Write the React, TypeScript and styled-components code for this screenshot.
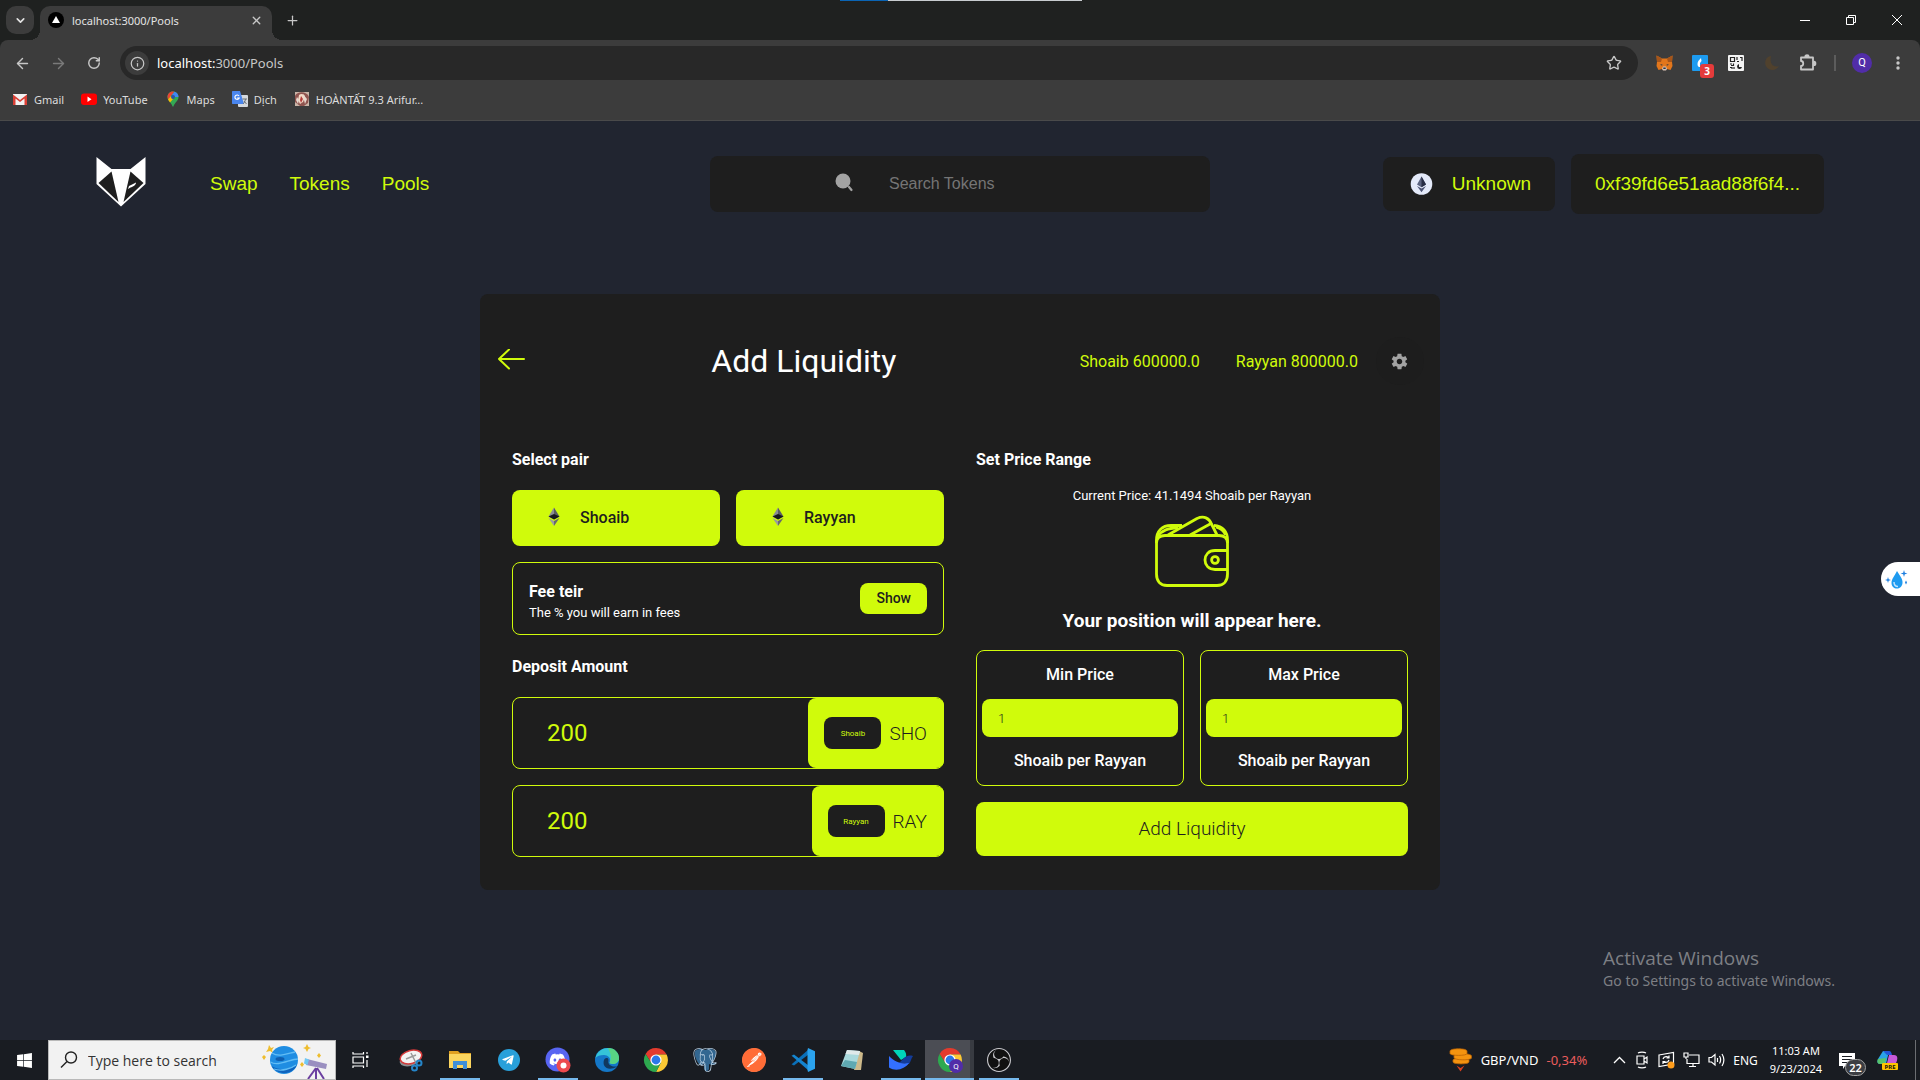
import React from "react";
import styled, { createGlobalStyle, css } from "styled-components";
import { FaWindows, FaDiscord, FaTelegramPlane } from "react-icons/fa";
import { SiPostman, SiPostgresql, SiObsstudio } from "react-icons/si";
import { IoMdSettings } from "react-icons/io";
import { X, Plus, ChevronDown, ArrowLeft, ArrowRight, Star, Info, RotateCw } from "lucide-react";

const color = {
  frame: "#1f2120",
  toolbar: "#3c3c3c",
  page: "#212530",
  panel: "#1e1e1e",
  lime: "#d0fb0b",
  taskbar: "#191c22",
};

const font = {
  system: `"Open Sans", "Noto Sans", sans-serif`,
  chrome: `"Noto Sans", "Open Sans", sans-serif`,
  arial: `"Liberation Sans", Arial, sans-serif`,
  roboto: `Roboto, "Liberation Sans", sans-serif`,
};

const GlobalStyle = createGlobalStyle`
  *, *::before, *::after { box-sizing: border-box; }
  body { margin: 0; background: ${color.page}; font-family: ${font.system}; }
  h1, h2, h3, p { margin: 0; }
  button, input { font: inherit; color: inherit; border: 0; margin: 0; padding: 0; background: none; }
  button { cursor: pointer; }
  a { color: inherit; text-decoration: none; }
  svg { display: block; flex: none; }
`;

const Screen = styled.div`
  min-height: 100vh;
  display: flex;
  flex-direction: column;
  position: relative;
`;

/* ---------- browser window ---------- */

const ShareLine = styled.div`
  position: absolute;
  top: 0;
  left: 50%;
  width: 242px;
  height: 1px;
  margin-left: -120px;
  background: linear-gradient(90deg, #0a64b4 48px, #c8ccd0 48px);
`;

const Frame = styled.header`
  background: ${color.frame};
  font-family: ${font.chrome};
`;

const TabStrip = styled.div`
  height: 40px;
  display: flex;
  align-items: flex-start;
  padding: 6px 0 0 6px;
`;

const TabSearch = styled.button`
  width: 28px;
  height: 28px;
  border-radius: 10px;
  background: ${color.toolbar};
  color: #e3e3e3;
  display: grid;
  place-items: center;
  margin-right: 6px;
`;

const Tab = styled.div`
  position: relative;
  width: 232px;
  height: 34px;
  padding: 0 8px 6px;
  display: flex;
  align-items: center;
  gap: 8px;
  background: ${color.toolbar};
  border-radius: 10px 10px 0 0;
  color: #e3e3e3;
  font-size: 11px;

  &::before,
  &::after {
    content: "";
    position: absolute;
    bottom: 0;
    width: 10px;
    height: 10px;
  }
  &::before {
    right: 100%;
    background: radial-gradient(circle at 0 0, transparent 10px, ${color.toolbar} 10px);
  }
  &::after {
    left: 100%;
    background: radial-gradient(circle at 100% 0, transparent 10px, ${color.toolbar} 10px);
  }
`;

const TabTitle = styled.span`
  flex: 1;
`;

const PlainButton = styled.button<{ $w?: number; $dim?: boolean }>`
  width: ${(p) => p.$w ?? 36}px;
  height: 28px;
  display: grid;
  place-items: center;
  color: ${(p) => (p.$dim ? "#7a7a7a" : "#c7c7c7")};
`;

const WindowButtons = styled.div`
  margin-left: auto;
  display: flex;
  color: #fff;
`;

const Toolbar = styled.div`
  background: ${color.toolbar};
  border-radius: 8px 8px 0 0;
  padding: 6px 4px 0;
  display: flex;
  align-items: center;
`;

const AddressBar = styled.div`
  flex: 1;
  height: 34px;
  margin: 0 8px;
  padding: 0 12px 0 5px;
  border-radius: 17px;
  background: #282828;
  display: flex;
  align-items: center;
  color: #c7c7c7;
  font-size: 13px;
`;

const SiteInfo = styled.button`
  width: 24px;
  height: 24px;
  border-radius: 50%;
  background: ${color.toolbar};
  display: grid;
  place-items: center;
  margin-right: 8px;
`;

const Url = styled.span`
  flex: 1;
  b { font-weight: 400; color: #fff; }
`;

const ExtensionButton = styled(PlainButton)`
  position: relative;
`;

const ExtensionBadge = styled.span`
  position: absolute;
  right: 4px;
  bottom: -1px;
  width: 14px;
  height: 14px;
  border-radius: 3px;
  background: #e53b3b;
  color: #fff;
  font: 700 10px/14px ${font.system};
  text-align: center;
`;

const ToolbarDivider = styled.div`
  width: 2px;
  height: 16px;
  margin: 0 8px;
  background: #5c5c5c;
`;

const ProfileDot = styled.span`
  width: 20px;
  height: 20px;
  border-radius: 50%;
  background: #512da8;
  color: #fff;
  font: 400 11px/20px ${font.roboto};
`;

const Bookmarks = styled.nav`
  height: 41px;
  padding: 8px 12px 10px;
  display: flex;
  align-items: center;
  gap: 17px;
  background: ${color.toolbar};
  border-bottom: 1px solid #4a4a4a;
  color: #dcdcdc;
  font-size: 11px;
`;

const Bookmark = styled.a`
  display: flex;
  align-items: center;
  gap: 6px;
`;

/* ---------- exchange page ---------- */

const Page = styled.main`
  flex: 1;
  background: ${color.page};
`;

const NavBar = styled.nav`
  width: 90%;
  margin: 0 auto;
  padding: 33px 0 80px;
  display: grid;
  grid-template-columns: 1fr 500px 1fr;
  align-items: center;
  font-family: ${font.arial};
  font-size: 19px;
  color: ${color.lime};
`;

const NavLeft = styled.div`
  display: flex;
  align-items: center;
  gap: 32px;
`;

const Brand = styled.a`
  margin-right: 32px;
`;

const TokenSearch = styled.label`
  height: 56px;
  border-radius: 8px;
  background: ${color.panel};
  display: flex;
  align-items: center;
  justify-content: center;
  gap: 35px;
`;

const TokenInput = styled.input`
  width: 196px;
  font-size: 16px;
  outline: 0;
  &::placeholder { color: #757575; opacity: 1; }
`;

const NavRight = styled.div`
  display: flex;
  align-items: center;
  justify-content: flex-end;
  gap: 16px;
`;

const NavButton = styled.button<{ $tall?: boolean }>`
  height: ${(p) => (p.$tall ? 60 : 54)}px;
  padding: 0 24px;
  border-radius: 8px;
  background: ${color.panel};
  display: flex;
  align-items: center;
  gap: 16px;
`;

const Card = styled.section`
  width: 50%;
  margin: 0 auto;
  border-radius: 8px;
  background: ${color.panel};
  color: #fff;
  font-family: ${font.roboto};
  font-size: 16px;
  line-height: 19px;
`;

const CardHeader = styled.div`
  padding: 43px 16px;
  display: flex;
  align-items: center;
  justify-content: space-between;
`;

const CardTitle = styled.h1`
  font-size: 32px;
  line-height: 38px;
  font-weight: 400;
`;

const Balances = styled.div`
  display: flex;
  align-items: center;
  gap: 36px;
  color: ${color.lime};
`;

const GearButton = styled.button`
  width: 48px;
  height: 48px;
  margin-left: -18px;
  border-radius: 50%;
  background: #1d1d1d;
  color: #a3a3a3;
  display: grid;
  place-items: center;
`;

const Columns = styled.div`
  padding: 22px 32px 33px;
  display: grid;
  grid-template-columns: repeat(2, minmax(0, 1fr));
  gap: 32px;
`;

const Column = styled.div`
  display: flex;
  flex-direction: column;
`;

const Heading = styled.h2<{ $after?: number }>`
  margin-bottom: ${(p) => p.$after ?? 21}px;
  font-size: 16px;
  line-height: 19px;
  font-weight: 700;
`;

const TwoUp = styled.div`
  display: grid;
  grid-template-columns: repeat(2, minmax(0, 1fr));
  gap: 16px;
  margin-bottom: 16px;
`;

const PairButton = styled.button`
  height: 56px;
  padding: 0 32px 2px;
  border-radius: 8px;
  background: ${color.lime};
  color: ${color.panel};
  font-weight: 500;
  display: flex;
  align-items: center;
  gap: 16px;
`;

const outlined = css`
  border: 1px solid ${color.lime};
  border-radius: 8px;
`;

const FeeBox = styled.div`
  ${outlined}
  height: 73px;
  margin-bottom: 22px;
  padding: 0 16px;
  display: flex;
  align-items: center;
  justify-content: space-between;
`;

const FeeText = styled.div`
  padding-top: 5px;
`;

const Small = styled.p<{ $center?: boolean }>`
  font-size: 13px;
  line-height: 16px;
  padding-top: 4px;
  text-align: ${(p) => (p.$center ? "center" : "left")};
`;

const FeeName = styled(Heading)`
  margin: 0;
`;

const ShowButton = styled.button`
  height: 31px;
  padding: 0 16px;
  border-radius: 8px;
  background: ${color.lime};
  color: ${color.panel};
  font-size: 14px;
  font-weight: 500;
`;

const DepositRow = styled.div`
  ${outlined}
  height: 72px;
  display: flex;
  & + & { margin-top: 16px; }
`;

const DepositInput = styled.input`
  flex: 1;
  min-width: 0;
  padding-left: 34px;
  font-size: 24px;
  color: ${color.lime};
  outline: 0;
`;

const TokenTag = styled.div`
  margin-right: -1px;
  padding: 0 17px 0 16px;
  border-radius: 8px;
  background: ${color.lime};
  color: ${color.panel};
  font-size: 19px;
  font-weight: 300;
  display: flex;
  align-items: center;
  gap: 8px;
`;

const Chip = styled.button`
  width: 57px;
  height: 32px;
  border-radius: 8px;
  background: ${color.panel};
  color: ${color.lime};
  font-size: 8px;
  font-weight: 400;
`;

const WalletWrap = styled.div`
  height: 80px;
  margin: 8px 0 18px;
  display: grid;
  place-items: center;
`;

const PositionNote = styled.h3`
  margin-bottom: 18px;
  font-size: 19px;
  line-height: 22px;
  font-weight: 700;
  text-align: center;
`;

const PriceBox = styled.div`
  ${outlined}
  padding: 14px 5px 15px;
  display: flex;
  flex-direction: column;
  text-align: center;
  font-weight: 500;
`;

const PriceInput = styled.input`
  width: 100%;
  height: 38px;
  margin: 15px 0 14px;
  padding: 0 16px;
  border-radius: 8px;
  background: ${color.lime};
  color: ${color.panel};
  font-size: 13px;
  font-weight: 300;
  outline: 0;
`;

const SubmitButton = styled.button`
  height: 54px;
  padding-bottom: 2px;
  border-radius: 8px;
  background: ${color.lime};
  color: ${color.panel};
  font-size: 19px;
  font-weight: 300;
`;

/* ---------- desktop overlays ---------- */

const SideWidget = styled.button`
  position: absolute;
  right: 0;
  top: 562px;
  width: 39px;
  height: 34px;
  padding-left: 4px;
  border-radius: 17px 0 0 17px;
  background: #fff;
`;

const Watermark = styled.div`
  position: absolute;
  right: 85px;
  bottom: 88px;
  color: #7d7f84;
  font-family: ${font.chrome};
  font-size: 14px;
  line-height: 22px;
`;

const WatermarkTitle = styled.div`
  font-family: ${font.system};
  font-size: 19px;
  line-height: 24px;
`;

/* ---------- taskbar ---------- */

const Taskbar = styled.footer`
  height: 40px;
  background: ${color.taskbar};
  color: #fff;
  display: flex;
  align-items: stretch;
`;

const TaskButton = styled.button<{ $w?: number }>`
  width: ${(p) => p.$w ?? 48}px;
  display: grid;
  place-items: center;
`;

const TaskSearch = styled.label`
  width: 288px;
  padding-left: 11px;
  border: 1px solid #b9b9b9;
  background: #f2f2f2;
  display: flex;
  align-items: center;
  gap: 10px;
`;

const TaskSearchInput = styled.input`
  flex: 1;
  min-width: 0;
  font-size: 14px;
  outline: 0;
  &::placeholder { color: #333; opacity: 1; }
`;

const Apps = styled.div`
  display: flex;
  padding-left: 2px;
`;

const AppButton = styled.button<{ $open?: boolean; $active?: boolean }>`
  width: 49px;
  display: grid;
  place-items: center;
  background: ${(p) => (p.$active ? "linear-gradient(#4b4d54, #4b4d54) no-repeat 0 0 / 45px 100%, #383b41" : "none")};
  box-shadow: ${(p) => (p.$active ? "inset 0 -2px #76b9ed" : "none")};
  &::after {
    content: "";
    display: ${(p) => (p.$open ? "block" : "none")};
    align-self: end;
    grid-area: 1 / 1;
    width: 40px;
    height: 2px;
    background: #76b9ed;
  }
  svg { grid-area: 1 / 1; }
`;

const Tray = styled.div`
  margin-left: auto;
  display: flex;
  align-items: center;
  font-family: ${font.chrome};
  font-size: 13px;
`;

const Currency = styled.button`
  display: flex;
  align-items: center;
  gap: 8px;
  margin-right: 26px;
  span { color: #ec5d5d; }
`;

const TrayIcons = styled.div`
  display: flex;
  align-items: center;
  gap: 8px;
`;

const Language = styled.span`
  font-size: 12px;
  margin: 0 12px 0 8px;
`;

const Clock = styled.div`
  font-size: 11px;
  line-height: 18px;
  text-align: center;
  margin-right: 16px;
`;

const Notices = styled.button`
  position: relative;
  width: 28px;
  height: 28px;
  margin-right: 11px;
`;

const NoticeCount = styled.span`
  position: absolute;
  right: 0;
  bottom: -2px;
  width: 21px;
  height: 17px;
  border: 1px solid #a0a0a0;
  border-radius: 9px;
  background: #3c3e43;
  font-size: 11px;
  line-height: 15px;
  font-weight: 600;
`;

const DesktopEdge = styled.div`
  align-self: stretch;
  width: 5px;
  margin-left: 16px;
  border-left: 1px solid #6c6e72;
`;

/* ---------- drawings ---------- */

const FoxLogo = () => (
  <svg width="50" height="54" viewBox="0 1 50 54">
    <path d="M0.500 1 L15.500 13 H34.500 L49.500 1 V28 L25 50.500 L0.500 28 Z" fill="#fff" />
    <path d="M15.500 15.500 L2.500 27 L22.500 46 Z" fill={color.panel} />
    <path d="M34.500 15.500 L47.500 27 L27.500 46 Z" fill={color.panel} />
    <path d="M32 33 L33 30 L40 26.500 C40 29 37 31 34.500 31.500 Z" fill="#fff" />
  </svg>
);

const Magnifier = () => (
  <svg width="19" height="22" viewBox="0 0 19 22">
    <circle cx="8" cy="8" r="7.500" fill="#a3a3a3" />
    <path d="M14 14 L16.500 17" stroke="#a3a3a3" strokeWidth="2.200" strokeLinecap="round" />
  </svg>
);

const EthCoin = () => (
  <svg width="29" height="23" viewBox="-3 0 29 23">
    <circle cx="11.500" cy="11" r="10.800" fill="#e4eafa" />
    <path d="M11.500 3.500 L16 11.600 L11.500 14.200 L7 11.600 Z" fill="#5b6380" />
    <path d="M11.500 3.500 L16 11.600 L11.500 14.200 Z" fill="#272d45" />
    <path d="M7 13 L11.500 19.200 L16 13 L11.500 15.600 Z" fill="#4c5475" />
  </svg>
);

const EthMark = () => (
  <svg width="20" height="20" viewBox="0 0 20 20">
    <path d="M10 0.500 L4.500 9.500 L10 12.500 Z" fill="#8b8d92" />
    <path d="M10 0.500 L15.500 9.500 L10 12.500 Z" fill="#5b5d62" />
    <path d="M4.500 9.500 L10 7 L15.500 9.500 L10 12.600 Z" fill="#16181c" />
    <path d="M4.500 11 L10 14 V19 Z" fill="#9b9ca0" />
    <path d="M15.500 11 L10 14 V19 Z" fill="#67696e" />
  </svg>
);

const BackArrow = () => (
  <svg width="32" height="24" viewBox="0 0 32 24" fill="none" stroke={color.lime} strokeWidth="2" strokeLinecap="round" strokeLinejoin="round">
    <path d="M28 10 H3 M13 0.500 L3 10 L13 19.500" />
  </svg>
);

const Wallet = () => (
  <svg width="76" height="74" viewBox="0 0 76 74" fill="none" stroke={color.lime} strokeWidth="2.800" strokeLinejoin="round">
    <path d="M2.500 28 C2.500 23 6 20.500 11 20.500 H65 C70 20.500 73.500 23 73.500 28 V59 C73.500 66 70 70.500 63 70.500 H13 C6 70.500 2.500 66 2.500 59 Z" />
    <path d="M2.500 28 V25 C2.500 16 8 10.500 17 10.500 H28" />
    <path d="M73.500 28 V25 C73.500 17 69 11 60 10.500" />
    <path d="M4 21 C8 15 14 13.500 24 12.500" />
    <path d="M14 20 L43 3.500 C50 0.500 55 3 57.500 9 L63 20" />
    <path d="M36 20 L57 8.500 M62 12 C67 13.500 70 16 71.500 20" />
    <path d="M73 35.500 H61 C54.500 35.500 51 40 51 45 C51 50 54.500 54.500 61 54.500 H73" />
    <circle cx="61" cy="45" r="3.400" />
  </svg>
);

const Droplet = () => (
  <svg width="26" height="24" viewBox="0 0 26 24">
    <path d="M12 4 C15 9 18 12 17.500 16 C17 20 14.500 21.500 12 21.500 C9 21.500 6.500 19.500 6.500 16 C6.500 12 9.500 9 12 4Z" fill="#1e9bf0" />
    <path d="M9 15 C9 18 11 19.500 13 19.500" stroke="#bfe3ff" strokeWidth="1.500" fill="none" />
    <path d="M19 3 L19.800 5.700 L22.500 6.500 L19.800 7.300 L19 10 L18.200 7.300 L15.500 6.500 L18.200 5.700Z M3 10 L3.700 12.300 L6 13 L3.700 13.700 L3 16 L2.300 13.700 L0 13 L2.300 12.300Z M21 13.500 L22 15.500 L21 17.500 L20 15.500Z" fill="#1e7fe0" />
  </svg>
);

const TriangleFavicon = () => (
  <svg width="16" height="16" viewBox="0 0 16 16">
    <circle cx="8" cy="8" r="8" fill="#000" />
    <path d="M8 4 L12 11 H4Z" fill="#fff" />
  </svg>
);

const GmailIcon = () => (
  <svg width="16" height="16" viewBox="0 0 16 16">
    <path d="M1 3 H15 V14 H1Z" fill="#f2f2f2" />
    <path d="M1 14 V3.500 L8 9 L15 3.500 V14 H12.500 V7.500 L8 11 L3.500 7.500 V14Z" fill="#d93f35" />
  </svg>
);

const YouTubeIcon = () => (
  <svg width="16" height="16" viewBox="0 0 16 16">
    <rect x="0" y="2.500" width="16" height="11.500" rx="3" fill="#f00" />
    <path d="M6.500 5.500 L10.500 8.200 L6.500 11Z" fill="#fff" />
  </svg>
);

const MapsIcon = () => (
  <svg width="16" height="16" viewBox="0 0 16 16">
    <path d="M8 0.500 C11.500 0.500 13.500 3 13.500 6 C13.500 10 9.500 11.500 8.500 15.500 H7.500 C6.500 11.500 2.500 10 2.500 6 C2.500 3 4.500 0.500 8 0.500Z" fill="#34a853" />
    <path d="M2.500 6 C2.500 3 4.500 0.500 8 0.500 L9.500 0.700 L3 8.500Z" fill="#ea4335" />
    <path d="M9.500 0.700 C12 1.500 13.500 3.500 13.500 6 L10 6 L7 4Z" fill="#4285f4" />
    <path d="M3 8.500 L6 5 L8 8 L5 11.500Z" fill="#fbbc04" />
    <circle cx="8" cy="6" r="2" fill="#2a56a8" />
  </svg>
);

const TranslateIcon = () => (
  <svg width="16" height="16" viewBox="0 0 16 16">
    <rect x="6" y="4" width="10" height="12" rx="1" fill="#d6d9dd" />
    <path d="M1 0 H8 L12 13 H1 C0.400 13 0 12.600 0 12 V1 C0 0.400 0.400 0 1 0Z" fill="#4a86ee" />
    <path d="M7 5 A2.200 2.200 0 1 0 7.200 7 H5.200" stroke="#fff" strokeWidth="1.200" fill="none" />
    <path d="M10.500 8 H15 M13.500 8 C13 11 12 12 11 13 M12 10 L14.500 13" stroke="#6b7075" fill="none" />
  </svg>
);

const PortraitIcon = () => (
  <svg width="16" height="16" viewBox="0 0 16 16">
    <path d="M1 1 H15 V15 H1Z" fill="#c9b5a8" />
    <path d="M1 5 C3 0 13 0 15 6 L14 12 L10 15 H6 L1 11Z" fill="#8f5550" />
    <path d="M5 4 C7 2 11 3 11 6 L9 11 L6 13 L4 9Z" fill="#f3d9c6" />
    <path d="M9 3 L13 8 L11 13 L10 9Z M3 6 L5 9 L4 13 L2 9Z" fill="#e8d9cf" />
    <path d="M7 5 L9 8 L7 12 L6 9Z" fill="#b23c3c" />
  </svg>
);

const MetaMask = () => (
  <svg width="17" height="16" viewBox="0 0 17 16">
    <path d="M0.500 0.500 L6 3.500 H11 L16.500 0.500 L16 7 L16.500 11 L14.500 15 L11 14 H6 L2.500 15 L0.500 11 L1 7Z" fill="#e2761b" />
    <path d="M0.500 0.500 L6 3.500 L5 7 L1 7Z M16.500 0.500 L11 3.500 L12 7 L16 7Z" fill="#a6551a" />
    <path d="M6 14 L7 11.500 H10 L11 14 L10 15.500 H7Z" fill="#d7c1b3" />
    <path d="M4.500 9 L7 10 L5 10.500Z M12.500 9 L10 10 L12 10.500Z M7.300 12.500 H9.700 V14 H7.300Z" fill="#233447" />
  </svg>
);

const FlameTile = () => (
  <svg width="16" height="16" viewBox="0 0 16 16">
    <rect width="16" height="16" rx="1" fill="#1d9bf0" />
    <path d="M9 3 C7 5 5.500 6.500 5.500 9 C5.500 10.500 6 11.500 7 12 H8 V8 L9.500 6Z" fill="#fff" />
  </svg>
);

const QrTile = () => (
  <svg width="16" height="16" viewBox="0 0 16 16">
    <rect width="16" height="16" rx="1" fill="#f4f4f4" />
    <path d="M2.500 2.500 H6.500 V6.500 H2.500Z M9 2 V5 M9 6.500 H11 M12 2.500 H14 V6 M2 9 H4 M5.500 8.500 V10.500 H3 M2 12.500 H4 V14 M6 12 V14" fill="none" stroke="#222" strokeWidth="1.200" />
    <path d="M11 9 A2.500 2.500 0 1 0 14 12 H11Z" fill="#222" />
  </svg>
);

const Moon = () => (
  <svg width="16" height="16" viewBox="0 0 16 16">
    <path d="M7 1 C1 2 0 8 2.500 12 C5.500 16 12 16 15 11 C10 13 5 9 7 1Z" fill="#50412d" />
  </svg>
);

const Puzzle = () => (
  <svg width="18" height="18" viewBox="0 0 18 18" fill="none" stroke="#c7c7c7" strokeWidth="1.800" strokeLinejoin="round">
    <path d="M2 3.500 H14 V15.500 H2 V12 C5 12 5 7 2 7Z" />
    <path d="M6.300 2.600 C6.300 0.800 9.700 0.800 9.700 2.600Z M15 7.700 C16.900 7.700 16.900 11.200 15 11.200Z" fill="#c7c7c7" />
  </svg>
);

const ChromeLogo = ({ badge }: { badge?: boolean }) => (
  <svg width="26" height="26" viewBox="0 0 26 26">
    <g transform="translate(1 1)">
      <path d="M1.600 6 A12 12 0 0 1 22.600 6.500 L12 6.500 L7.200 14.750Z" fill="#e33b2e" />
      <path d="M12 6.500 H22.600 A12 12 0 0 1 12 24 L16.800 14.750Z" fill="#fcc934" />
      <path d="M1.600 6 L7.200 14.750 H16.800 L12 24 A12 12 0 0 1 1.600 6Z" fill="#2da94f" />
      <circle cx="12" cy="12" r="5.600" fill="#fff" />
      <circle cx="12" cy="12" r="4.400" fill="#2b78e8" />
    </g>
    {badge && (
      <g>
        <circle cx="19" cy="19" r="7" fill="#512da8" />
        <text x="19" y="22" fill="#fff" fontSize="8" fontFamily="Roboto" textAnchor="middle">Q</text>
      </g>
    )}
  </svg>
);

const Planet = () => (
  <svg width="73" height="38" viewBox="0 0 73 38">
    <path d="M7 4 L9 7 L12 6 L10 9 L11 12 L8 10 L4 11 L6 8Z M45 3 L46.500 6 L49 7 L46.500 8 L45 11 L43.500 8 L41 7 L43.500 6Z M2 14 L4 16 L2 19 L0 16Z M57 12 L59 14.500 L57 17 L55 14.500Z M40 21 L42 23.500 L40 26 L38 23.500Z" fill="#eebd2e" />
    <circle cx="22" cy="19" r="14" fill="#1f8de2" />
    <path d="M9.500 25 C14 33 29 36 35 24 C28 29 18 30 9.500 25Z" fill="#0f63bd" />
    <path d="M10 12 C17 17 27 12 33 11 M8.500 21 C16 26 28 18 36 18 M12 28 C20 31 30 27 34 24" stroke="#62bdf5" strokeWidth="1.300" fill="none" />
    <ellipse cx="18" cy="18" rx="4.500" ry="2" fill="#0e5eb0" />
    <path d="M45 18 L65 23 L64 28 L44 24Z" fill="#9a8fc0" />
    <path d="M43 17 L47 18.500 L45.500 24 L42 22.500Z" fill="#70c8f4" />
    <path d="M54 27 L46 38 M54 27 V38 M55 27 L62 38" stroke="#6b3fa0" strokeWidth="2" />
  </svg>
);

const TaskView = () => (
  <svg width="17" height="16" viewBox="0 0 17 16" fill="none" stroke="#fff" strokeWidth="1.200">
    <path d="M1 0 V2 H11.500 V0 M1 16 V14 H11.500 V16 M1 5 H11.500 V11 H1Z M15 0 V2 M15 8 V15" />
    <path d="M14 3.500 H16.500 V6 H14Z" fill="#fff" stroke="none" />
  </svg>
);

const Snip = () => (
  <svg width="24" height="24" viewBox="0 0 24 24">
    <ellipse cx="11" cy="12" rx="10.500" ry="6" fill="#8b8e92" transform="rotate(-15 11 12)" />
    <ellipse cx="12" cy="9" rx="11" ry="6.500" fill="#f3f3f3" stroke="#d43a3a" strokeWidth="1.500" transform="rotate(-15 12 9)" />
    <path d="M12 5 L17 15 M7 11 L17 7" stroke="#999" strokeWidth="1.500" />
    <g fill="none" stroke="#2585c9" strokeWidth="2">
      <circle cx="20" cy="15" r="2.500" />
      <circle cx="15.500" cy="20" r="2.500" />
    </g>
  </svg>
);

const Folder = () => (
  <svg width="22" height="20" viewBox="0 0 22 20">
    <path d="M0 1 H9 L11 3 H22 V17 H0Z" fill="#e0a021" />
    <path d="M0 4 H22 V18 H0Z" fill="#fbd55f" />
    <path d="M4 19 V11 H18 V19 H14 V15 H8 V19Z" fill="#3f8fd8" />
  </svg>
);

const Telegram = () => (
  <svg width="22" height="22" viewBox="0 0 22 22">
    <circle cx="11" cy="11" r="11" fill="#29a0da" />
    <FaTelegramPlane x="3.500" y="4.500" size={13} color="#fff" />
  </svg>
);

const Discord = () => (
  <svg width="26" height="26" viewBox="0 0 26 26">
    <circle cx="12.500" cy="12.500" r="12" fill="#5865f2" />
    <FaDiscord x="4" y="4" size={17} color="#fff" />
    <circle cx="18.500" cy="18.500" r="7" fill="#ed4a4e" />
    <circle cx="18.500" cy="18.500" r="3" fill="#fff" />
  </svg>
);

const Edge = () => (
  <svg width="24" height="24" viewBox="0 0 24 24">
    <circle cx="12" cy="12" r="12" fill="#1477c8" />
    <path d="M0.500 10 C2 3 8 0 13 0 C20 0 24 5 24 10 C24 14 21 16 17.500 16 C15 16 14 15 15 13.500 C16 10 13 7 9 7 C5 7 2 8 0.500 10Z" fill="#35c3d8" />
    <path d="M13 0 C20 0 24 5 24 10 C24 14 21 16 17.500 16 C15 16 14 15 15 13.500 C17 9 15 4 13 0Z" fill="#61d86f" opacity="0.800" />
    <path d="M9 12 C7 18 12 24 22.500 18.500 C19 19 14.500 18 13.500 15 C13 13 14 12 13 10.500 C12 9.500 10 10 9 12Z" fill="#10233c" opacity="0.750" />
  </svg>
);

const Elephant = () => (
  <svg width="24" height="24" viewBox="0 0 24 24">
    <path d="M2 3 C6 0 10 1 12 2 C16 0 23 1 23 5 C23 9 20 13 19 15 C21 15.500 22 15 23 15 C21 18 18 17 16 16 V21 C15 24 11 24 11 20 V16 C8 18 6 17 4 13 C2 9 1 6 2 3Z" fill="#336791" />
    <SiPostgresql size={24} color="#b9cfe2" />
  </svg>
);

const Postman = () => (
  <svg width="24" height="24" viewBox="0 0 24 24">
    <circle cx="12" cy="12" r="11.500" fill="#fff" />
    <SiPostman size={24} color="#ff6c37" />
  </svg>
);

const VsCode = () => (
  <svg width="24" height="24" viewBox="0 0 24 24">
    <path d="M1.500 15.500 L17.500 1.500 V6.500 L3 17.500 L0.500 16.300Z" fill="#0a6fb8" />
    <path d="M1.500 8.500 L17.500 22.500 V17.500 L3 6.500 L0.500 7.700Z" fill="#1484cf" />
    <path d="M17 0 L24 3.200 V20.800 L17 24 L16.500 22 V2Z" fill="#2ba3ee" />
  </svg>
);

const Notepad = () => (
  <svg width="24" height="24" viewBox="0 0 24 24">
    <path d="M19 3 L23 5 L21 22 L14 22Z" fill="#cdb98a" />
    <path d="M7 2 L20 3 L15 21 L1 18Z" fill="#a9d9dd" />
    <path d="M7 2 L20 3 L19 7 L5.500 6Z" fill="#dfe9ea" />
    <path d="M5 12 L17 14 L15 21 L1 18Z" fill="#5fa9b2" />
  </svg>
);

const Bird = () => (
  <svg width="24" height="22" viewBox="0 0 24 22">
    <path d="M4 1 H15 C17 3 17.500 6 17 8 L12 11Z" fill="#00d6b9" />
    <path d="M24 7 C20 6 17 7 15 9 L10 14 L20 15 C22 12 22 10 24 7Z" fill="#133c9a" />
    <path d="M0 7 C6 13 12 15.500 20 14 C16 20 7 23 0 18.500Z" fill="#3370ff" />
  </svg>
);

const Obs = () => (
  <svg width="24" height="24" viewBox="0 0 24 24">
    <circle cx="12" cy="12" r="11" fill="#111" />
    <SiObsstudio size={24} color="#c9c9cd" />
  </svg>
);

const Coins = () => (
  <svg width="24" height="24" viewBox="0 0 24 24">
    <g fill="#f4930f" stroke="#b86205" strokeWidth="0.800">
      <path d="M4 12 C4 9.500 20 9.500 20 12 V14 C20 16.500 4 16.500 4 14Z" />
      <path d="M5 7.500 C5 5 22.500 5 22.500 8 V10 C22.500 12.500 5 12.500 5 9.500Z" />
      <path d="M1 3 C1 0 18 0 18 3 V5.500 C18 8 1 8 1 5.500Z" />
    </g>
    <path d="M7.500 17.500 L11.500 20 L15.500 17.500 L11.500 23.500Z" fill="#d8411e" />
  </svg>
);

const Copilot = () => (
  <svg width="22" height="21" viewBox="0 0 22 21">
    <path d="M6 1 H12 L9 14 H3 C0 14 0 11 1 9Z" fill="#2aa3e8" />
    <path d="M6 1 H12 C14 1 14.500 3 15 5 H10Z" fill="#2456d8" />
    <path d="M12 5 H17 C21 5 21 9 19 13 H10Z" fill="#c759d8" />
    <path d="M1 9 L9 8 L8 14 H3 C0 14 0 11 1 9Z" fill="#58c46a" />
    <rect x="5" y="13" width="16" height="7" rx="1" fill="#ffc400" />
    <text x="13" y="19" fontSize="6" fontWeight="700" fontFamily="Open Sans" textAnchor="middle" fill="#111">PRE</text>
  </svg>
);

const bookmarks = [
  { label: "Gmail", icon: <GmailIcon /> },
  { label: "YouTube", icon: <YouTubeIcon /> },
  { label: "Maps", icon: <MapsIcon /> },
  { label: "Dịch", icon: <TranslateIcon /> },
  { label: "HOÀNTẤT 9.3 Arifur...", icon: <PortraitIcon /> },
];

const apps = [
  { name: "Snipping Tool", icon: <Snip /> },
  { name: "File Explorer", icon: <Folder />, open: true },
  { name: "Telegram", icon: <Telegram /> },
  { name: "Discord", icon: <Discord />, open: true },
  { name: "Edge", icon: <Edge /> },
  { name: "Chrome", icon: <ChromeLogo /> },
  { name: "pgAdmin", icon: <Elephant /> },
  { name: "Postman", icon: <Postman /> },
  { name: "VS Code", icon: <VsCode />, open: true },
  { name: "Notepad", icon: <Notepad /> },
  { name: "Lark", icon: <Bird />, open: true },
  { name: "Chrome profile Q", icon: <ChromeLogo badge />, active: true },
  { name: "OBS Studio", icon: <Obs />, open: true },
];

const deposits = [
  { token: "Shoaib", symbol: "SHO" },
  { token: "Rayyan", symbol: "RAY" },
];

const Browser = () => (
  <Frame>
    <TabStrip>
      <TabSearch aria-label="Search tabs"><ChevronDown size={13} strokeWidth={3} /></TabSearch>
      <Tab>
        <TriangleFavicon />
        <TabTitle>localhost:3000/Pools</TabTitle>
        <PlainButton $w={16} aria-label="Close tab"><X size={13} strokeWidth={2.5} /></PlainButton>
      </Tab>
      <PlainButton $w={40} aria-label="New tab"><Plus size={15} /></PlainButton>
      <WindowButtons>
        <PlainButton $w={46} aria-label="Minimize">
          <svg width="10" height="10"><path d="M0 5.500 H10" stroke="#fff" /></svg>
        </PlainButton>
        <PlainButton $w={46} aria-label="Restore">
          <svg width="10" height="10" fill="none" stroke="#fff"><path d="M0.500 2.500 H7.500 V9.500 H0.500Z M2.500 2.500 V0.500 H9.500 V7.500 H7.500" /></svg>
        </PlainButton>
        <PlainButton $w={46} aria-label="Close window">
          <svg width="10" height="10" stroke="#fff"><path d="M0 0 L10 10 M10 0 L0 10" /></svg>
        </PlainButton>
      </WindowButtons>
    </TabStrip>
    <Toolbar>
      <PlainButton aria-label="Back"><ArrowLeft size={17} /></PlainButton>
      <PlainButton $dim aria-label="Forward"><ArrowRight size={17} /></PlainButton>
      <PlainButton aria-label="Reload"><RotateCw size={14} strokeWidth={2.5} /></PlainButton>
      <AddressBar>
        <SiteInfo aria-label="Site information"><Info size={15} /></SiteInfo>
        <Url><b>localhost:</b>3000/Pools</Url>
        <PlainButton $w={24} aria-label="Bookmark"><Star size={16} /></PlainButton>
      </AddressBar>
      <PlainButton aria-label="MetaMask"><MetaMask /></PlainButton>
      <ExtensionButton aria-label="Wallet extension"><FlameTile /><ExtensionBadge>3</ExtensionBadge></ExtensionButton>
      <PlainButton aria-label="QR code"><QrTile /></PlainButton>
      <PlainButton aria-label="Dark mode"><Moon /></PlainButton>
      <PlainButton aria-label="Extensions"><Puzzle /></PlainButton>
      <ToolbarDivider />
      <PlainButton aria-label="Profile"><ProfileDot>Q</ProfileDot></PlainButton>
      <PlainButton aria-label="Menu">
        <svg width="4" height="16" fill="#c7c7c7"><circle cx="2" cy="3" r="1.700" /><circle cx="2" cy="8" r="1.700" /><circle cx="2" cy="13" r="1.700" /></svg>
      </PlainButton>
    </Toolbar>
    <Bookmarks>
      {bookmarks.map((b) => (
        <Bookmark href="#" key={b.label}>{b.icon}{b.label}</Bookmark>
      ))}
    </Bookmarks>
  </Frame>
);

const AddLiquidity = () => (
  <Card>
    <CardHeader>
      <button aria-label="Back to pools"><BackArrow /></button>
      <CardTitle>Add Liquidity</CardTitle>
      <Balances>
        <span>Shoaib 600000.0</span>
        <span>Rayyan 800000.0</span>
        <GearButton aria-label="Settings"><IoMdSettings size={19} /></GearButton>
      </Balances>
    </CardHeader>
    <Columns>
      <Column>
        <Heading>Select pair</Heading>
        <TwoUp>
          <PairButton><EthMark />Shoaib</PairButton>
          <PairButton><EthMark />Rayyan</PairButton>
        </TwoUp>
        <FeeBox>
          <FeeText>
            <FeeName>Fee teir</FeeName>
            <Small>The % you will earn in fees</Small>
          </FeeText>
          <ShowButton>Show</ShowButton>
        </FeeBox>
        <Heading>Deposit Amount</Heading>
        {deposits.map((d) => (
          <DepositRow key={d.token}>
            <DepositInput aria-label={`${d.token} amount`} defaultValue="200" />
            <TokenTag><Chip>{d.token}</Chip>{d.symbol}</TokenTag>
          </DepositRow>
        ))}
      </Column>
      <Column>
        <Heading $after={15}>Set Price Range</Heading>
        <Small $center>Current Price: 41.1494 Shoaib per Rayyan</Small>
        <WalletWrap><Wallet /></WalletWrap>
        <PositionNote>Your position will appear here.</PositionNote>
        <TwoUp>
          {["Min", "Max"].map((k) => (
            <PriceBox key={k}>
              <label htmlFor={`price-${k}`}>{k} Price</label>
              <PriceInput id={`price-${k}`} defaultValue="1" />
              <span>Shoaib per Rayyan</span>
            </PriceBox>
          ))}
        </TwoUp>
        <SubmitButton>Add Liquidity</SubmitButton>
      </Column>
    </Columns>
  </Card>
);

const SystemTray = () => (
  <Tray>
    <Currency><Coins />GBP/VND <span>-0,34%</span></Currency>
    <TrayIcons>
      <svg width="13" height="8" fill="none" stroke="#fff" strokeWidth="1.300"><path d="M1 7 L6.500 1.500 L12 7" /></svg>
      <svg width="16" height="18" viewBox="3 0 16 18" fill="none" stroke="#fff" strokeWidth="1.200">
        <path d="M6 5 H13 V13 H6Z M13 8 L16 6 V12 L13 10 M7 2 C9 0.800 13 0.800 15 2 M7 16 C9 17.200 13 17.200 15 16" />
      </svg>
      <svg width="17" height="18" viewBox="0 0 17 18" fill="none" stroke="#fff" strokeWidth="1.200">
        <path d="M1 4 L15.500 1.500 V13 L1 15.500Z M5 8 C6 5 10 5 11 7 M11 4.500 V7 H8.500 M11 9 C10 12 6 12 5 10.500 M5 13 V10.500 H7.500" />
        <circle cx="13" cy="14" r="3.500" fill="#ff9d1c" stroke="none" />
      </svg>
      <svg width="17" height="16" viewBox="0 0 17 16" fill="none" stroke="#fff" strokeWidth="1.200">
        <path d="M6 3 H16 V11.500 H4 V7 M10 11.500 V14.500 M6 14.500 H13 M1 1 H5 V5 H1Z M3 5 V7" />
      </svg>
      <svg width="17" height="16" viewBox="0 0 17 16" fill="none" stroke="#fff" strokeWidth="1.200">
        <path d="M1 5.500 H3.500 L7 2.500 V13 L3.500 10 H1Z M9.500 6 V10 M11.500 4 C13 6.500 13 9 11.500 11.500 M14 2 C16.500 6 16.500 10 14 14" />
      </svg>
    </TrayIcons>
    <Language>ENG</Language>
    <Clock>
      <div>11:03 AM</div>
      <div>9/23/2024</div>
    </Clock>
    <Notices aria-label="Notifications">
      <svg width="18" height="18" viewBox="0 0 18 18">
        <path d="M1 2 H17 V15 H7 L5 18 V15 H1Z" fill="#fff" />
        <path d="M4 5.500 H14 M4 8.500 H14 M4 11.500 H10" stroke={color.taskbar} />
      </svg>
      <NoticeCount>22</NoticeCount>
    </Notices>
    <Copilot />
    <DesktopEdge />
  </Tray>
);

export default function App() {
  return (
    <Screen>
      <GlobalStyle />
      <Browser />
      <ShareLine />
      <Page>
        <NavBar>
          <NavLeft>
            <Brand href="#" aria-label="Home"><FoxLogo /></Brand>
            <a href="#">Swap</a>
            <a href="#">Tokens</a>
            <a href="#">Pools</a>
          </NavLeft>
          <TokenSearch>
            <Magnifier />
            <TokenInput placeholder="Search Tokens" aria-label="Search Tokens" />
          </TokenSearch>
          <NavRight>
            <NavButton><EthCoin />Unknown</NavButton>
            <NavButton $tall>0xf39fd6e51aad88f6f4...</NavButton>
          </NavRight>
        </NavBar>
        <AddLiquidity />
      </Page>
      <SideWidget aria-label="Assistant"><Droplet /></SideWidget>
      <Watermark>
        <WatermarkTitle>Activate Windows</WatermarkTitle>
        Go to Settings to activate Windows.
      </Watermark>
      <Taskbar>
        <TaskButton aria-label="Start"><FaWindows size={17} /></TaskButton>
        <TaskSearch>
          <svg width="18" height="18" viewBox="0 0 18 18" fill="none" stroke="#222" strokeWidth="1.400">
            <circle cx="11" cy="6.500" r="5.500" /><path d="M7 10.500 L1 16.500" />
          </svg>
          <TaskSearchInput placeholder="Type here to search" aria-label="Type here to search" />
          <Planet />
        </TaskSearch>
        <TaskButton aria-label="Task view"><TaskView /></TaskButton>
        <Apps>
          {apps.map((a) => (
            <AppButton key={a.name} aria-label={a.name} $open={a.open} $active={a.active}>{a.icon}</AppButton>
          ))}
        </Apps>
        <SystemTray />
      </Taskbar>
    </Screen>
  );
}
